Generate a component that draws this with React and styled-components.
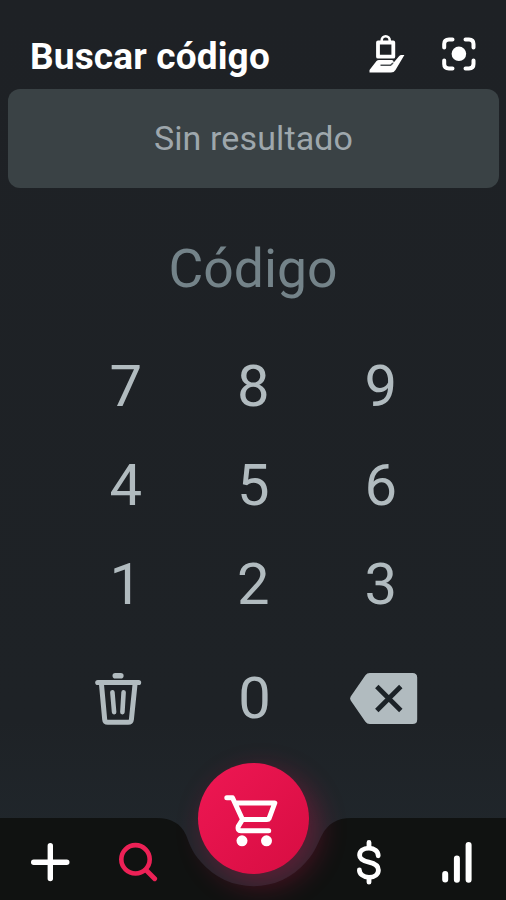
import React from 'react'
import styled, { createGlobalStyle } from 'styled-components'

const GlobalStyle = createGlobalStyle`
  body {
    margin: 0;
    background: #1e2226;
  }

  button {
    border: 0;
    padding: 0;
    background: none;
    color: inherit;
    font: inherit;
  }
`

const Screen = styled.div`
  display: flex;
  flex-direction: column;
  box-sizing: border-box;
  width: 506px;
  height: 900px;
  overflow: hidden;
  font-family: Roboto, 'Liberation Sans', sans-serif;
  background: linear-gradient(#1e2125 0%, #1e2226 80%, #20262b 92%);
`

const Header = styled.header`
  display: flex;
  align-items: center;
  height: 89px;
  box-sizing: border-box;
  padding: 24px 28px 0 30px;
`

const Title = styled.h1`
  flex: 1;
  margin: 0;
  font-size: 37px;
  line-height: 42px;
  font-weight: 700;
  letter-spacing: 0.15px;
  white-space: nowrap;
  color: #ffffff;
`

const HeaderActions = styled.div`
  display: flex;
  align-items: center;
  gap: 34px;
  padding-bottom: 5px;
`

const IconButton = styled.button`
  display: flex;
  color: #ffffff;
`

const ResultCard = styled.section`
  display: flex;
  align-items: center;
  justify-content: center;
  height: 99px;
  margin: 0 7px 0 8px;
  border-radius: 12px;
  background: #3a4245;
`

const ResultText = styled.p`
  margin: 0;
  padding-bottom: 2px;
  font-size: 34px;
  line-height: 40px;
  letter-spacing: 0.12px;
  color: #9ea7ac;
`

const CodeField = styled.div`
  display: flex;
  align-items: center;
  justify-content: center;
  height: 64px;
  margin-top: 49px;
  font-size: 53.5px;
  line-height: 64px;
  color: #748389;
`

const Keypad = styled.div`
  display: grid;
  grid-template-columns: repeat(3, 127.5px);
  grid-template-rows: 99px 99px 99px 129px;
  margin: 35px 0 0 62px;
`

const Key = styled.button`
  display: flex;
  align-items: center;
  justify-content: center;
  font-size: 58px;
  line-height: 68px;
  color: #b1bbbf;
  transform: translate(${(props) => props.$x || '0px'}, ${(props) => props.$y || '0px'});
`

const NavBar = styled.nav`
  position: relative;
  display: grid;
  grid-template-columns: 156px 196px 154px;
  height: 82px;
  margin-top: auto;
`

/* raised above the notch, the magnifier handle crosses its edge */
const NavSide = styled.div`
  z-index: 1;
  display: flex;
  align-items: flex-start;
  gap: ${(props) => props.$gap};
  padding: ${(props) => props.$top} 0 0 ${(props) => props.$left};
  background: #101211;
`

const NavButton = styled.button`
  display: flex;
  flex: none;
  margin-top: ${(props) => props.$drop || '0px'};
  color: ${(props) => (props.$active ? '#ec2156' : '#ffffff')};
`

/* floats over the notch of the bar */
const CartButton = styled.button`
  position: absolute;
  z-index: 2;
  top: -55.5px;
  left: 198px;
  display: flex;
  align-items: center;
  justify-content: center;
  width: 111px;
  height: 111px;
  border-radius: 50%;
  color: #ffffff;
  background: linear-gradient(135deg, #ee1753, #d70d42);
  box-shadow: 8px 10px 28px 2px rgba(215, 20, 75, 0.32);
`

function BagHandIcon() {
  return (
    <svg width="38" height="40" viewBox="368 34 38 40" fill="none">
      <path d="M378 42.5H393.3V56.7H378Z" stroke="currentColor" strokeWidth="3.8" strokeLinejoin="round" />
      <path d="M381.7 43V40.2a4 4 0 0 1 8 0V43" stroke="currentColor" strokeWidth="2.6" />
      <path
        d="M369.5 72.5V70L376.5 61Q377.5 60 379 60H391.5Q394 60.3 393.5 62.7L399 56.2Q400 55 401.5 55H404.4L395.5 70Q394 72.5 391 72.5Z"
        fill="currentColor"
      />
      <path d="M380.5 65.3H390.5L393 63" stroke="#4a4f53" strokeWidth="1.6" />
    </svg>
  )
}

function ScanIcon() {
  return (
    <svg width="38" height="40" viewBox="440 34 38 40" fill="none">
      <path
        d="M444.2 47.5V44Q444.2 39.4 449 39.4H452.5M465.5 39.4H469Q473.5 39.4 473.5 44V47.5M473.5 60.5V64Q473.5 68.4 469 68.4H465.5M452.5 68.4H449Q444.2 68.4 444.2 64V60.5"
        stroke="currentColor"
        strokeWidth="4"
        strokeLinecap="round"
      />
      <circle cx="458.9" cy="53.8" r="7.3" fill="currentColor" />
    </svg>
  )
}

function TrashIcon() {
  return (
    <svg width="48" height="54" viewBox="94 671 48 54" fill="none" stroke="currentColor" strokeLinecap="round">
      <path d="M115.5 675.2H121" strokeWidth="5.6" />
      <path d="M98 682H138.8" strokeWidth="5.2" />
      <path d="M101.7 684L104.9 719Q105.1 721.8 108 721.8H128.3Q131.3 721.8 131.6 719L135.2 684" strokeWidth="5" />
      <path d="M112.6 691.8L114.3 711.6M123.8 691.8L122.6 711.6" strokeWidth="4.6" />
    </svg>
  )
}

function BackspaceIcon() {
  return (
    <svg width="70" height="54" viewBox="348 672 70 54" fill="none">
      <path
        d="M369.5 673.2H412.3Q417 673.2 417 677.8V719.8Q417 724.4 412.3 724.4H369.5Q366.8 724.4 365.2 722L350.5 700.7Q349.2 698.8 350.5 696.9L365.2 675.6Q366.8 673.2 369.5 673.2Z"
        fill="currentColor"
      />
      <path d="M376.6 686.8L400.6 710.8M400.6 686.8L376.6 710.8" stroke="#1c2328" strokeWidth="4.8" />
    </svg>
  )
}

function CartIcon() {
  return (
    <svg width="56" height="56" viewBox="225.5 790 56 56" fill="none" overflow="visible">
      <path
        d="M226.3 797.8H232L242 819.5H266.5Q268 819.5 268.7 818.2L274.3 803H234.5M242 819.5L237.8 826.4Q236.7 830.7 240.5 830.7H268.2"
        stroke="currentColor"
        strokeWidth="5"
        strokeLinecap="round"
        strokeLinejoin="round"
      />
      <circle cx="241.5" cy="840.8" r="5.5" fill="currentColor" />
      <circle cx="266" cy="840.8" r="5.5" fill="currentColor" />
    </svg>
  )
}

function PlusIcon() {
  return (
    <svg width="40" height="40" viewBox="30 842 40 40" fill="none">
      <path d="M50.3 845.7V878.6M33.7 862.3H66.8" stroke="currentColor" strokeWidth="5.4" strokeLinecap="round" />
    </svg>
  )
}

function SearchIcon() {
  return (
    <svg width="40" height="40" viewBox="118 842 40 40" fill="none">
      <circle cx="135.5" cy="859.3" r="14.2" stroke="currentColor" strokeWidth="4.6" />
      <path d="M146 870L154.7 878.8" stroke="currentColor" strokeWidth="4.8" strokeLinecap="round" />
    </svg>
  )
}

function DollarIcon() {
  return (
    <svg width="28" height="48" viewBox="355 839 28 48" fill="none" stroke="currentColor" strokeLinecap="round">
      <path
        d="M378.2 855.8C378.2 851.5 374.5 848.2 369 848.2C363 848.2 359.6 851.3 359.6 855.2C359.6 858.9 362.5 860.7 368.8 862.1C375.5 863.6 378.4 865.8 378.4 869.9C378.4 874 374.9 877.3 369 877.3C363 877.3 359.4 873.7 359.4 869.9"
        strokeWidth="4.8"
      />
      <path d="M369 842.5V847M369 878V882.2" strokeWidth="4.8" />
    </svg>
  )
}

function BarsIcon() {
  return (
    <svg width="34" height="44" viewBox="440 841 34 44" fill="none">
      <path
        d="M445.2 874V879.6M456.9 858.5V879.8M468.6 845V879.8"
        stroke="currentColor"
        strokeWidth="6"
        strokeLinecap="round"
      />
    </svg>
  )
}

function Notch() {
  return (
    <svg width="196" height="82" viewBox="0 0 196 82">
      <path
        d="M0 0C16 0 25 6 30 17C33 24 35 33 45 44A69 69 0 0 0 150 44C160 33 162 24 166 17C172 6 180 0 196 0V82H0Z"
        fill="#101211"
      />
    </svg>
  )
}

const digits = ['7', '8', '9', '4', '5', '6', '1', '2', '3']

export default function App() {
  return (
    <Screen>
      <GlobalStyle />
      <Header>
        <Title>Buscar código</Title>
        <HeaderActions>
          <IconButton aria-label="Pedidos"><BagHandIcon /></IconButton>
          <IconButton aria-label="Escanear"><ScanIcon /></IconButton>
        </HeaderActions>
      </Header>
      <ResultCard>
        <ResultText>Sin resultado</ResultText>
      </ResultCard>
      <CodeField>Código</CodeField>
      <Keypad>
        {digits.map((digit) => (
          <Key key={digit} $y="-0.5px">{digit}</Key>
        ))}
        <Key $x="-8.2px" $y="0.5px" aria-label="Borrar todo"><TrashIcon /></Key>
        <Key $x="1.2px">0</Key>
        <Key $x="2.2px" $y="0.7px" aria-label="Retroceso"><BackspaceIcon /></Key>
      </Keypad>
      <NavBar>
        <NavSide $left="30px" $top="24px" $gap="48px">
          <NavButton aria-label="Agregar"><PlusIcon /></NavButton>
          <NavButton $active aria-label="Buscar"><SearchIcon /></NavButton>
        </NavSide>
        <Notch />
        <NavSide $left="3px" $top="21px" $gap="57px">
          <NavButton aria-label="Ventas"><DollarIcon /></NavButton>
          <NavButton $drop="2px" aria-label="Reportes"><BarsIcon /></NavButton>
        </NavSide>
        <CartButton aria-label="Carrito"><CartIcon /></CartButton>
      </NavBar>
    </Screen>
  )
}
